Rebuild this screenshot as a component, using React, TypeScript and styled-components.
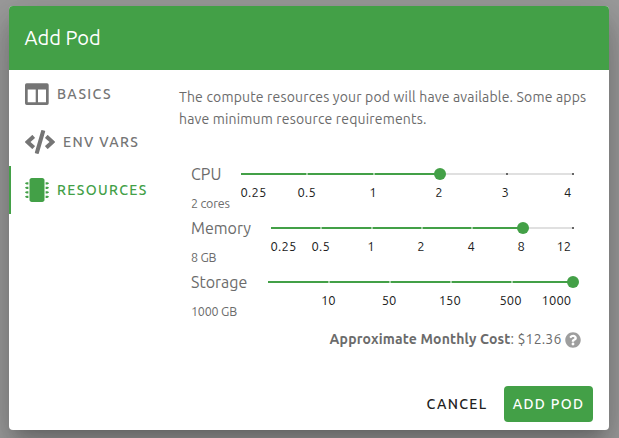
import React from "react";
import styled, { createGlobalStyle, css } from "styled-components";
import { FaCode, FaMicrochip, FaQuestionCircle } from "react-icons/fa";

const GREEN = "#43a047";

const GlobalStyle = createGlobalStyle`
  *, *::before, *::after { box-sizing: border-box; }
  html, body, #root { height: 100%; }
  body {
    margin: 0;
    overflow: hidden;
    background: #9c9c9c;
    font-family: Ubuntu, "Noto Sans", sans-serif;
    color: #6b6b6b;
  }
`;

const Backdrop = styled.div`
  height: 100%;
  padding: 6px 10px 8px 9px;
`;

const Dialog = styled.section`
  display: flex;
  flex-direction: column;
  width: 600px;
  height: 424px;
  overflow: hidden;
  border-radius: 4px;
  background: #fff;
  box-shadow: 0 11px 15px -7px rgba(0, 0, 0, 0.2), 0 24px 38px 3px rgba(0, 0, 0, 0.14),
    0 9px 46px 8px rgba(0, 0, 0, 0.12);
`;

const Header = styled.h2`
  flex: none;
  margin: 0;
  height: 64px;
  padding-left: 15.5px;
  background: ${GREEN};
  color: #fff;
  font-size: 20px;
  font-weight: 400;
  line-height: 64px;
`;

const Body = styled.div`
  display: flex;
  flex: 1;
`;

const Nav = styled.nav`
  width: 170px;
`;

const Tab = styled.button<{ $active?: boolean; $iconWidth?: number }>`
  display: flex;
  align-items: center;
  gap: 8px;
  width: 100%;
  height: 48px;
  padding: 0 0 0 14px;
  border: 0;
  border-left: 2px solid ${(p) => (p.$active ? GREEN : "transparent")};
  background: none;
  color: ${(p) => (p.$active ? GREEN : "#757575")};
  font: 500 14px Ubuntu, "Noto Sans", sans-serif;
  letter-spacing: 1.37px;
  white-space: nowrap;
  svg { flex: none; height: 24px; width: ${(p) => p.$iconWidth ?? 24}px; }
`;

const Content = styled.main`
  width: 430px;
  padding: 16px 16px 0 0;
`;

const Intro = styled.p`
  margin: 0 0 32px;
  font-size: 14px;
  line-height: 22px;
  letter-spacing: 0.17px;
  white-space: nowrap;
`;

const ResourceRow = styled.div`
  display: flex;
  height: 54px;
  padding: 0 20px 0 12px;
`;

const ResourceLabel = styled.div<{ $width: number }>`
  flex: none;
  width: ${(p) => p.$width}px;
  white-space: nowrap;
`;

const ResourceName = styled.div`
  font-size: 16px;
  line-height: 24px;
`;

const ResourceValue = styled.div`
  margin-top: 8px;
  font-size: 12.5px;
  line-height: 19px;
  letter-spacing: -0.2px;
`;

const Slider = styled.div`
  flex: 1;
  padding-top: 11px;
`;

const Track = styled.div`
  position: relative;
  height: 2px;
  background: #e0e0e0;
`;

const Fill = styled.div`
  height: 2px;
  background: ${GREEN};
`;

const Tick = styled.i<{ $passed: boolean }>`
  position: absolute;
  top: 0;
  width: 2px;
  height: 2px;
  margin-left: -1px;
  background: ${(p) => (p.$passed ? "#a5d0a7" : "#666")};
`;

const Thumb = styled.i`
  position: absolute;
  top: -5px;
  width: 12px;
  height: 12px;
  margin-left: -6px;
  border-radius: 50%;
  background: ${GREEN};
`;

const Scale = styled.div`
  display: flex;
  justify-content: space-between;
  margin: 7px 1px 0 -0.4px;
  padding-right: 0.6px;
  color: #212121;
  font-size: 13px;
  line-height: 20px;
`;

const ScaleLabel = styled.span<{ $edge?: "start" | "end" }>`
  display: flex;
  width: 0;
  justify-content: center;
  letter-spacing: 0.15px;
  ${(p) => p.$edge && css`justify-content: flex-${p.$edge};`}
`;

const Cost = styled.div`
  display: flex;
  align-items: center;
  justify-content: flex-end;
  height: 22px;
  margin-top: 4px;
  padding-right: 12.5px;
  font-size: 14px;
  letter-spacing: 0.17px;
  white-space: nowrap;
  svg { margin: 2px 0 0 3px; color: #9e9e9e; }
`;

const CostLabel = styled.span`
  font-weight: 700;
`;

const Actions = styled.footer`
  display: flex;
  justify-content: flex-end;
  gap: 8px;
  height: 52px;
  padding: 8px 16px 8px 0;
`;

const ActionButton = styled.button<{ $primary?: boolean }>`
  width: ${(p) => (p.$primary ? 89 : 78)}px;
  height: 36px;
  padding: 0;
  border: 0;
  border-radius: 4px;
  background: ${(p) => (p.$primary ? GREEN : "transparent")};
  color: ${(p) => (p.$primary ? "#fff" : "#212121")};
  font: 500 14px Ubuntu, "Noto Sans", sans-serif;
  letter-spacing: 1.35px;
  white-space: nowrap;
`;

type Resource = {
  name: string;
  value: string;
  stops: string[];
  selected: number;
  width: number;
};

const resources: Resource[] = [
  { name: "CPU", value: "2 cores", stops: ["0.25", "0.5", "1", "2", "3", "4"], selected: 3, width: 50 },
  { name: "Memory", value: "8 GB", stops: ["0.25", "0.5", "1", "2", "4", "8", "12"], selected: 5, width: 80 },
  { name: "Storage", value: "1000 GB", stops: ["", "10", "50", "150", "500", "1000"], selected: 5, width: 77 },
];

function ColumnsIcon() {
  return (
    <svg viewBox="0 0 24 24" fill="currentColor" fillRule="evenodd">
      <path d="M1.7 1.3H22a1.7 1.7 0 0 1 1.7 1.7v18.3A1.7 1.7 0 0 1 22 23H1.7A1.7 1.7 0 0 1 0 21.3V3a1.7 1.7 0 0 1 1.7-1.7ZM2.7 7.5v12.7h8V7.5ZM13 7.5v12.7h8V7.5Z" />
    </svg>
  );
}

function ResourceSlider({ resource }: { resource: Resource }) {
  const { stops, selected } = resource;
  const last = stops.length - 1;
  const position = (i: number) => `${(i / last) * 100}%`;
  return (
    <ResourceRow>
      <ResourceLabel $width={resource.width}>
        <ResourceName>{resource.name}</ResourceName>
        <ResourceValue>{resource.value}</ResourceValue>
      </ResourceLabel>
      <Slider>
        <Track>
          <Fill style={{ width: position(selected) }} />
          {stops.map((_, i) => i > 0 && <Tick key={i} $passed={i < selected} style={{ left: position(i) }} />)}
          <Thumb style={{ left: position(selected) }} />
        </Track>
        <Scale>
          {stops.map((stop, i) => (
            <ScaleLabel key={i} $edge={i === 0 ? "start" : i === last ? "end" : undefined}>{stop}</ScaleLabel>
          ))}
        </Scale>
      </Slider>
    </ResourceRow>
  );
}

export default function App() {
  return (
    <>
      <GlobalStyle />
      <Backdrop>
        <Dialog>
          <Header>Add Pod</Header>
          <Body>
            <Nav>
              <Tab><ColumnsIcon />BASICS</Tab>
              <Tab $iconWidth={30}><FaCode />ENV VARS</Tab>
              <Tab $active><FaMicrochip />RESOURCES</Tab>
            </Nav>
            <Content>
              <Intro>
                The compute resources your pod will have available. Some apps
                <br />
                have minimum resource requirements.
              </Intro>
              {resources.map((resource) => <ResourceSlider key={resource.name} resource={resource} />)}
              <Cost>
                <CostLabel>Approximate Monthly Cost</CostLabel>
                <span>: $12.36</span>
                <FaQuestionCircle size={16} />
              </Cost>
            </Content>
          </Body>
          <Actions>
            <ActionButton>CANCEL</ActionButton>
            <ActionButton $primary>ADD POD</ActionButton>
          </Actions>
        </Dialog>
      </Backdrop>
    </>
  );
}
